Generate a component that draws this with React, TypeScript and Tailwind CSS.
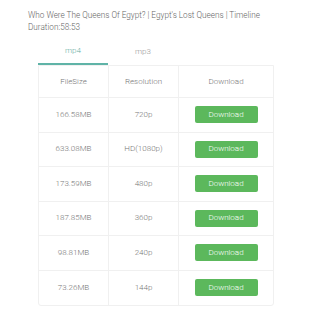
const rows = [
  { size: '166.58MB', res: '720p' },
  { size: '633.08MB', res: 'HD(1080p)' },
  { size: '173.59MB', res: '480p' },
  { size: '187.85MB', res: '360p' },
  { size: '98.81MB', res: '240p' },
  { size: '73.26MB', res: '144p' },
];

export default function App() {
  return (
    <div className="w-[311px] h-[320px] bg-white font-['Roboto',sans-serif] font-light text-[#777]">
      <div className="pl-[28px] pt-[9px] pr-4 text-[8.2px] leading-[12px] text-[#666]">
        <p>Who Were The Queens Of Egypt? | Egypt's Lost Queens | Timeline</p>
        <p>Duration:58:53</p>
      </div>

      <div className="ml-[38px] mt-[5px] w-[236px]">
        {/* Tabs */}
        <div className="flex text-[8px]">
          <div className="w-[70px] h-[27px] flex items-center justify-center text-[#6aaea4] border-b-2 border-[#5fb3a7]">
            mp4
          </div>
          <div className="w-[70px] h-[27px] flex items-center justify-center text-[#999]">mp3</div>
        </div>

        {/* Table */}
        <div className="border border-[#f0f0f0] rounded-b-[3px] text-[8px]">
          <div className="flex h-[32px] border-b border-[#f0f0f0]">
            <div className="w-[70px] flex items-center justify-center border-r border-[#f0f0f0]">FileSize</div>
            <div className="w-[70px] flex items-center justify-center border-r border-[#f0f0f0]">Resolution</div>
            <div className="flex-1 flex items-center justify-center">Download</div>
          </div>
          {rows.map((r, i) => (
            <div
              key={i}
              className={`flex h-[34.5px] ${i < rows.length - 1 ? 'border-b border-[#f0f0f0]' : ''}`}
            >
              <div className="w-[70px] flex items-center justify-center border-r border-[#f0f0f0]">{r.size}</div>
              <div className="w-[70px] flex items-center justify-center border-r border-[#f0f0f0]">{r.res}</div>
              <div className="flex-1 flex items-center justify-center">
                <button className="w-[63px] h-[17px] rounded-[2px] bg-[#5cb85c] text-white text-[8px] font-light">
                  Download
                </button>
              </div>
            </div>
          ))}
        </div>
      </div>
    </div>
  );
}
